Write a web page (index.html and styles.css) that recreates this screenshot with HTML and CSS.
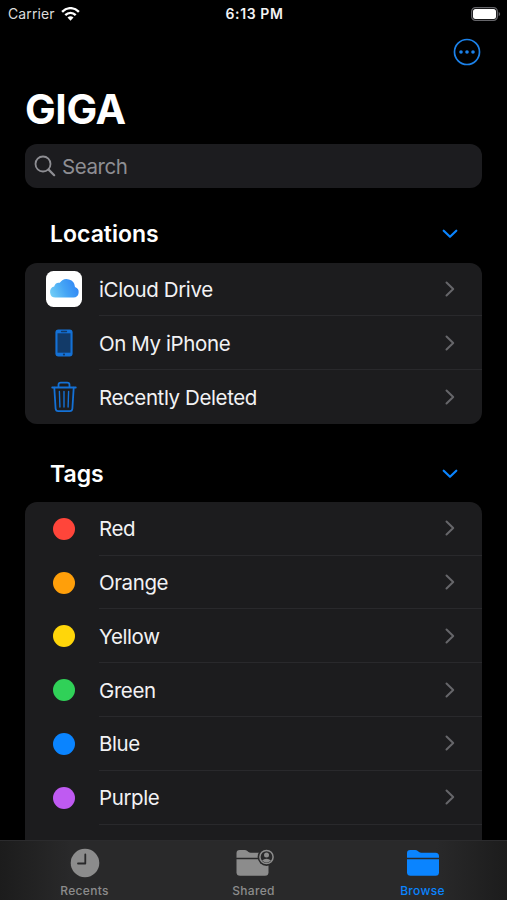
FILE: index.html
```html
<!DOCTYPE html>
<html lang="en">
<head>
  <meta charset="UTF-8" />
  <meta name="viewport" content="width=device-width, initial-scale=1.0"/>
  <title>GIGA</title>
  <link rel="stylesheet" href="styles.css">
</head>
<body>

<!-- shared icons -->
<svg width="0" height="0" class="defs">
  <symbol id="right" viewBox="0 0 10 16"><path d="M1.5 1.5 8.2 8 1.5 14.5" fill="none" stroke="currentColor" stroke-width="2" stroke-linecap="round" stroke-linejoin="round"/></symbol>
  <symbol id="down" viewBox="0 0 16 10"><path d="M1.7 1.7 8 7.8l6.3-6.1" fill="none" stroke="currentColor" stroke-width="2.2" stroke-linecap="round" stroke-linejoin="round"/></symbol>
</svg>

<div class="screen">
  <div class="status">
    <div class="carrier">
      <span>Carrier</span>
      <svg class="wifi" width="19" height="14" viewBox="0 0 19 14" fill="none" stroke="#fff" stroke-width="2.4">
        <path d="M1.1 4.9C6-.1 13-.1 17.900 4.900"/>
        <path d="M4.300 8.100c3-3 7.400-3 10.400 0"/>
        <path d="M6.500 10.600Q9.500 8.100 12.500 10.600L9.500 13.700z" fill="#fff" stroke="none"/>
      </svg>
    </div>
    <span class="time">6:13 PM</span>
    <svg class="battery" width="30" height="14" viewBox="0 0 30 14">
      <rect x=".7" y=".7" width="25.600" height="12.600" rx="3.800" fill="none" stroke="#66666a" stroke-width="1.300"/>
      <rect x="2" y="2" width="23" height="10" rx="2.500" fill="#fff"/>
      <path d="M27.700 4.700q3 2.300 0 4.600z" fill="#66666a"/>
    </svg>
  </div>

  <div class="nav">
    <svg class="more" width="28" height="28" viewBox="0 0 28 28">
      <circle cx="14" cy="14" r="12.500" fill="none" stroke="#1c82ea" stroke-width="1.700"/>
      <g fill="#1c82ea"><circle cx="8" cy="14" r="1.800"/><circle cx="14" cy="14" r="1.800"/><circle cx="20" cy="14" r="1.800"/></g>
    </svg>
  </div>

  <h1>GIGA</h1>
  <div class="search">
    <svg width="22" height="22" viewBox="0 0 22 22" fill="none" stroke="#8e8e93" stroke-linecap="round">
      <circle cx="9" cy="9" r="7.500" stroke-width="1.800"/>
      <path d="M14.600 14.600l5.600 5.600" stroke-width="2.200"/>
    </svg>
    <span>Search</span>
  </div>

  <div class="section-title first">
    <h2>Locations</h2>
    <svg class="down"><use href="#down"/></svg>
  </div>
  <div class="list">
    <div class="row">
      <div class="icon">
        <svg width="36" height="36" viewBox="0 0 36 36">
          <defs>
            <linearGradient id="cloud" x1="0" y1=".7" x2="1" y2=".4"><stop offset="0" stop-color="#70ccf6"/><stop offset=".5" stop-color="#45a5f5"/><stop offset="1" stop-color="#3186f5"/></linearGradient>
          </defs>
          <rect width="36" height="36" rx="7.500" fill="#fff"/>
          <path d="M9.500 26.600a5.600 5.600 0 0 1-1.300-11 5 5 0 0 1 5.600-3.800 8.300 8.300 0 0 1 15.200 4.300 5.400 5.400 0 0 1-1.500 10.500z" fill="url(#cloud)"/>
        </svg>
      </div>
      <div class="cell"><span>iCloud Drive</span><svg class="right"><use href="#right"/></svg></div>
    </div>
    <div class="row">
      <div class="icon">
        <svg width="18" height="28" viewBox="0 0 18 28">
          <rect x=".4" y=".4" width="17.200" height="27.200" rx="3" fill="#1471d6"/>
          <rect x="2.500" y="4.300" width="13" height="19.400" fill="#123a68"/>
          <path d="M6.500 2.500h5" stroke="#123a68" stroke-width="1.300" stroke-linecap="round"/>
          <circle cx="9" cy="25.500" r="1.100" fill="#123a68"/>
        </svg>
      </div>
      <div class="cell"><span>On My iPhone</span><svg class="right"><use href="#right"/></svg></div>
    </div>
    <div class="row">
      <div class="icon">
        <svg width="26" height="32" viewBox="0 0 26 32" fill="none" stroke="#1471d6" stroke-width="1.800" stroke-linecap="round" stroke-linejoin="round">
          <path d="M1.200 6.500h23.600M7.500 6.200V3.800Q7.500 1.600 9.800 1.600h6.400q2.300 0 2.300 2.200v2.400"/>
          <path d="M3.300 6.700l1.300 20.800q.2 2.700 2.800 2.700h11.200q2.600 0 2.800-2.700l1.300-20.800"/>
          <path d="M8.400 10.500l.5 15.500M13 10.500V26M17.600 10.500l-.5 15.500" stroke-width="1.400"/>
        </svg>
      </div>
      <div class="cell"><span>Recently Deleted</span><svg class="right"><use href="#right"/></svg></div>
    </div>
  </div>

  <div class="section-title">
    <h2>Tags</h2>
    <svg class="down"><use href="#down"/></svg>
  </div>
  <div class="list tags">
    <div class="row"><div class="icon"><i class="dot red"></i></div><div class="cell"><span>Red</span><svg class="right"><use href="#right"/></svg></div></div>
    <div class="row"><div class="icon"><i class="dot orange"></i></div><div class="cell"><span>Orange</span><svg class="right"><use href="#right"/></svg></div></div>
    <div class="row"><div class="icon"><i class="dot yellow"></i></div><div class="cell"><span>Yellow</span><svg class="right"><use href="#right"/></svg></div></div>
    <div class="row"><div class="icon"><i class="dot green"></i></div><div class="cell"><span>Green</span><svg class="right"><use href="#right"/></svg></div></div>
    <div class="row"><div class="icon"><i class="dot blue"></i></div><div class="cell"><span>Blue</span><svg class="right"><use href="#right"/></svg></div></div>
    <div class="row"><div class="icon"><i class="dot purple"></i></div><div class="cell"><span>Purple</span><svg class="right"><use href="#right"/></svg></div></div>
  </div>

  <!-- tab bar -->
  <div class="tabbar">
    <div class="tab">
      <svg width="30" height="30" viewBox="0 0 30 30">
        <circle cx="15" cy="15" r="14.300" fill="currentColor"/>
        <path d="M15.300 6.500V15.500H8" fill="none" stroke="#29292a" stroke-width="1.800" stroke-linecap="round" stroke-linejoin="round"/>
      </svg>
      <span>Recents</span>
    </div>
    <div class="tab">
      <svg width="40" height="30" viewBox="0 0 40 30">
        <path d="M2.500 9.700V5.200Q2.500 2 5.700 2h5q1.500 0 2.600 1l1.200 1q1 .7 2.200.7H30V9.700z" fill="currentColor"/>
        <path d="M2.500 11.200H34.500V24.200Q34.500 27.700 31 27.700H6Q2.500 27.700 2.500 24.200z" fill="currentColor"/>
        <circle cx="32.500" cy="9" r="8.900" fill="#29292a"/>
        <circle cx="32.500" cy="9" r="6.600" fill="none" stroke="currentColor" stroke-width="1.500"/>
        <circle cx="32.500" cy="7" r="2.500" fill="currentColor"/>
        <path d="M28 12.500q4.500-3.500 9 0-4.500 3.800-9 0z" fill="currentColor"/>
      </svg>
      <span>Shared</span>
    </div>
    <div class="tab active">
      <svg width="34" height="30" viewBox="0 0 34 30">
        <path d="M1 9.700V5.200Q1 2 4.200 2h5q1.500 0 2.600 1l1.200 1q1 .7 2.200.7H29.500Q33 4.700 33 8.200V9.700z" fill="currentColor"/>
        <path d="M1 11.200H33V24.200Q33 27.700 29.500 27.700H4.500Q1 27.700 1 24.200z" fill="currentColor"/>
      </svg>
      <span>Browse</span>
    </div>
  </div>
</div>

</body>
</html>
```

FILE: styles.css
```css
* {
  box-sizing: border-box;
}

body {
  margin: 0;
  background: #000;
  color: #f2f2f4;
  font-family: Inter, "Liberation Sans", sans-serif;
}

.defs {
  display: none;
}

.screen {
  display: flex;
  flex-direction: column;
  width: 507px;
  height: 900px;
  overflow: hidden;
}

.status {
  display: grid;
  grid-template-columns: 1fr auto 1fr;
  align-items: center;
  height: 27px;
  padding: 0 6px 0 8px;
  font-size: 14px;
  flex: none;
}

.carrier {
  display: flex;
  align-items: center;
  gap: 6px;
  color: #dcdcdc;
  letter-spacing: 0.1px;
}

.time {
  font-weight: 600;
  letter-spacing: 0.6px;
}

.battery {
  justify-self: end;
}

.nav {
  display: flex;
  justify-content: flex-end;
  height: 54px;
  padding: 11px 26px 0 0;
  flex: none;
}

h1 {
  margin: 0 25px;
  height: 63px;
  line-height: 56px;
  font-size: 41px;
  font-weight: 700;
  letter-spacing: -0.4px;
  color: #fff;
  flex: none;
}

.search {
  display: flex;
  align-items: center;
  gap: 6px;
  height: 44px;
  margin: 0 25px;
  padding-left: 9px;
  border-radius: 12px;
  background: #1c1c1f;
  color: #8e8e93;
  font-size: 20.5px;
  letter-spacing: -0.45px;
  flex: none;
}

.section-title {
  display: flex;
  align-items: center;
  justify-content: space-between;
  height: 78px;
  padding: 22px 49px 0 50px;
  flex: none;
}

.section-title.first {
  height: 74.5px;
  padding-top: 18px;
}

h2 {
  margin: 0;
  font-size: 23px;
  font-weight: 600;
  color: #fff;
}

.down {
  width: 16px;
  height: 10px;
  color: #0a84ff;
}

.list {
  margin: 0 25px;
  border-radius: 12px;
  background: #1c1c1e;
  overflow: hidden;
  flex: none;
}

.tags {
  height: 338px;
  border-radius: 12px 12px 0 0;
}

.row {
  display: flex;
  height: 53.8px;
}

.icon {
  display: flex;
  align-items: center;
  justify-content: center;
  width: 74px;
  padding-left: 4px;
}

.cell {
  display: flex;
  align-items: center;
  justify-content: space-between;
  flex: 1;
  padding-right: 27px;
  border-bottom: 1px solid #29292c;
  font-size: 20.5px;
  letter-spacing: -0.4px;
}

.cell span {
  padding-top: 1px;
}

.list:not(.tags) .row:last-child .cell {
  border-bottom: none;
}

.right {
  width: 10px;
  height: 16px;
  color: #66666a;
}

.dot {
  width: 22px;
  height: 22px;
  border-radius: 50%;
}

.red { background: #ff453a; }
.orange { background: #ff9f0a; }
.yellow { background: #ffd60a; }
.green { background: #30d158; }
.blue { background: #0a84ff; }
.purple { background: #bf5af2; }

.tabbar {
  display: flex;
  flex: none;
  height: 61px;
  background: linear-gradient(to right, #1c1c1c, #29292a 14%, #29292a 86%, #1c1c1c);
  border-top: 1px solid #2b2b2d;
}

.tab {
  display: flex;
  flex-direction: column;
  align-items: center;
  flex: 1;
  padding-top: 7px;
  color: #8c8c8c;
  font-size: 12px;
  font-weight: 500;
  letter-spacing: 0.3px;
}

.tab span {
  margin-top: 5px;
}

.tab.active {
  color: #0a84ff;
}
```
